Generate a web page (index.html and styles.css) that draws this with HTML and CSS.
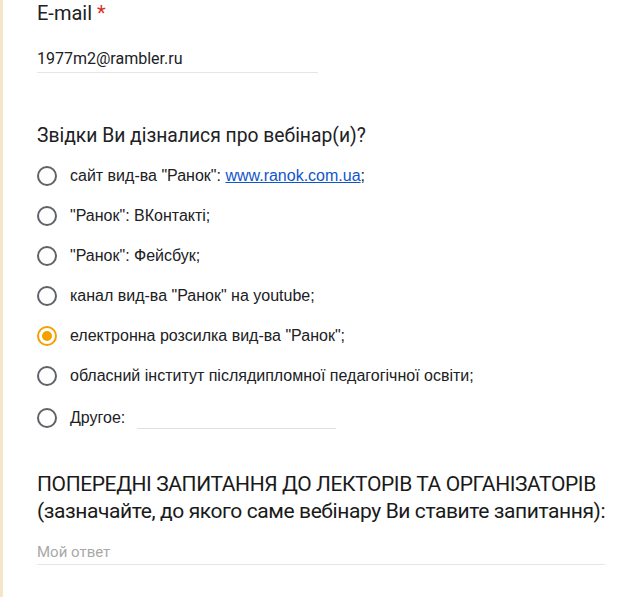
FILE: index.html
```html
<!DOCTYPE html>
<html lang="uk">
<head>
<meta charset="utf-8">
<link rel="stylesheet" href="styles.css">
</head>
<body>
<div class="page">
  <section class="q q-email">
    <div class="q-title">E-mail <span class="req">*</span></div>
    <div class="answer"><span class="answer-text">1977m2@rambler.ru</span></div>
  </section>

  <section class="q q-source">
    <div class="q-title src-title">Звідки Ви дізналися про вебінар(и)?</div>
    <ul class="options">
      <li class="opt"><span class="radio"></span><span class="opt-text">сайт вид-ва "Ранок": <a class="link" href="#">www.ranok.com.ua</a>;</span></li>
      <li class="opt"><span class="radio"></span><span class="opt-text">"Ранок": ВКонтакті;</span></li>
      <li class="opt"><span class="radio"></span><span class="opt-text">"Ранок": Фейсбук;</span></li>
      <li class="opt"><span class="radio"></span><span class="opt-text">канал вид-ва "Ранок" на youtube;</span></li>
      <li class="opt"><span class="radio checked"></span><span class="opt-text">електронна розсилка вид-ва "Ранок";</span></li>
      <li class="opt"><span class="radio"></span><span class="opt-text">обласний інститут післядипломної педагогічної освіти;</span></li>
      <li class="opt opt-other"><span class="radio"></span><span class="opt-text">Другое:</span><span class="other-line"></span></li>
    </ul>
  </section>

  <section class="q q-questions">
    <div class="q-title caps">ПОПЕРЕДНІ ЗАПИТАННЯ ДО ЛЕКТОРІВ ТА ОРГАНІЗАТОРІВ (зазначайте, до якого саме вебінару Ви ставите запитання):</div>
    <div class="answer wide"><span class="placeholder">Мой ответ</span></div>
  </section>
</div>
</body>
</html>
```

FILE: styles.css
```css
html, body {
  margin: 0;
  padding: 0;
  background: #ffffff;
}
body {
  font-family: Roboto, "Liberation Sans", Arial, sans-serif;
  color: #202124;
}
.page {
  min-height: 597px;
  box-sizing: border-box;
  border-left: 3px solid #f3e6c9;
  padding: 0 0 0 34px;
}
.q-title {
  font-size: 20px;
  line-height: 28px;
  color: #202124;
}
.req {
  color: #d93025;
}
.q-email .q-title {
  line-height: 26px;
}
.answer {
  width: 281px;
  border-bottom: 1px solid #e6e6e6;
  margin-top: 23px;
  height: 24px;
  box-sizing: border-box;
}
.answer-text {
  display: block;
  font-size: 16px;
  line-height: 20px;
  color: #202124;
}
.q-source {
  margin-top: 49px;
}
.src-title {
  font-size: 19.3px;
}
.options {
  list-style: none;
  margin: 6px 0 0 0;
  padding: 0;
}
.opt {
  display: flex;
  align-items: center;
  height: 40px;
  font-family: "Liberation Sans", Arial, sans-serif;
  font-size: 16px;
  color: #202124;
}
.radio {
  width: 16px;
  height: 16px;
  border: 2px solid #5f6368;
  border-radius: 50%;
  margin-right: 13px;
  flex: none;
  position: relative;
}
.radio.checked {
  border-color: #f5a000;
}
.radio.checked::after {
  content: "";
  position: absolute;
  left: 3px;
  top: 3px;
  width: 10px;
  height: 10px;
  border-radius: 50%;
  background: #f5a000;
}
.link {
  color: #1155cc;
  text-decoration: underline;
}
.opt-other {
  height: 44px;
}
.other-line {
  width: 199px;
  height: 20px;
  border-bottom: 1px solid #e0e0e0;
  margin-left: 12px;
}
.q-questions {
  margin-top: 31px;
}
.caps {
  font-size: 21px;
  letter-spacing: -0.4px;
  line-height: 27px;
  width: 580px;
  color: #1a1a1a;
}
.answer.wide {
  width: 568px;
  margin-top: 17px;
  height: 23px;
}
.placeholder {
  font-size: 15px;
  color: #a8a8a8;
}
```
